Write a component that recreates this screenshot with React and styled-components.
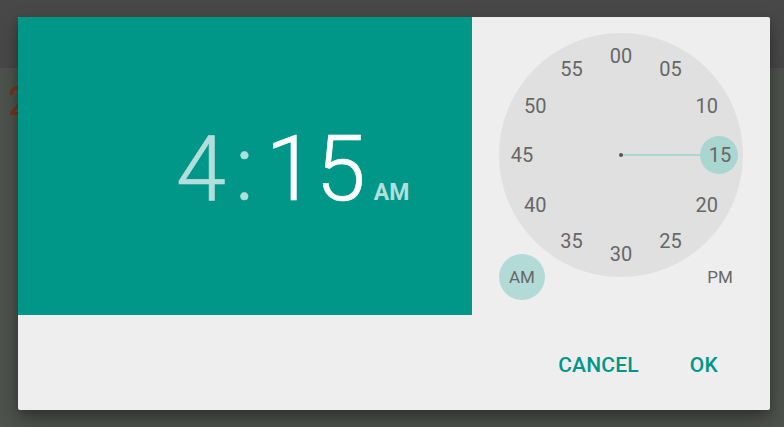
import React from "react";
import styled, { createGlobalStyle } from "styled-components";

const Global = createGlobalStyle`
  html, body { margin: 0; padding: 0; }
  body { font-family: Roboto, "Noto Sans", "Liberation Sans", sans-serif; background: #4e544d; }
`;

const Page = styled.div`
  position: relative;
  width: 784px;
  height: 427px;
  overflow: hidden;
  background: #4e544d;
`;

const AppBar = styled.div`
  height: 68px;
  background: #484848;
`;

const Content = styled.div`
  padding: 14px 0 0 8px;
`;

const BigNumber = styled.div`
  font-size: 40px;
  line-height: 40px;
  color: #7a3417;
`;

const Overlay = styled.div`
  position: absolute;
  inset: 0;
  padding: 17px 14px 17px 18px;
  display: flex;
  align-items: flex-start;
`;

const Dialog = styled.div`
  width: 752px;
  height: 393px;
  background: #eeeeee;
  border-radius: 2px;
  overflow: hidden;
  box-shadow: 0 12px 24px rgba(0, 0, 0, 0.28), 0 4px 8px rgba(0, 0, 0, 0.2);
  display: grid;
  grid-template-columns: 454px 298px;
  grid-template-rows: 298px 1fr;
`;

const Header = styled.div`
  background: #009688;
  display: flex;
  align-items: center;
  padding-left: 158px;
`;

const Time = styled.div`
  display: flex;
  align-items: baseline;
  line-height: 1;
  transform: translateY(4px);
`;

const Digit = styled.span`
  font-size: 90px;
  font-weight: 300;
  color: ${(p) => (p.$active ? "#ffffff" : "#b2dfdb")};
  -webkit-text-stroke: 0.6px currentColor;
`;

const Sep = styled.span`
  font-size: 90px;
  font-weight: 300;
  color: #b2dfdb;
  margin: 0 12px 0 9px;
  -webkit-text-stroke: 0.6px currentColor;
`;

const Meridiem = styled.span`
  font-size: 23px;
  font-weight: 700;
  color: #b2dfdb;
  margin-left: 8px;
`;

const ClockPane = styled.div`
  display: flex;
  flex-direction: column;
  align-items: center;
  padding-top: 16px;
`;

const Face = styled.div`
  position: relative;
  width: 244px;
  height: 244px;
  border-radius: 50%;
  background: #e0e0e0;
`;

const Num = styled.span`
  position: absolute;
  transform: translate(-50%, -50%);
  font-size: 20px;
  color: #676767;
  line-height: 1;
  z-index: 2;
`;

const Hand = styled.div`
  position: absolute;
  left: 122px;
  top: 121px;
  width: 98px;
  height: 2px;
  background: #a9d6d1;
`;

const Dot = styled.div`
  position: absolute;
  left: 120px;
  top: 120px;
  width: 4px;
  height: 4px;
  border-radius: 50%;
  background: #555555;
`;

const Selector = styled.div`
  position: absolute;
  left: 201px;
  top: 103px;
  width: 38px;
  height: 38px;
  border-radius: 50%;
  background: #a9d6d1;
`;

const AmPmRow = styled.div`
  width: 244px;
  margin-top: -23px;
  display: flex;
  justify-content: space-between;
`;

const AmPm = styled.div`
  width: 46px;
  height: 46px;
  border-radius: 50%;
  display: flex;
  align-items: center;
  justify-content: center;
  font-size: 17px;
  color: #676767;
  background: ${(p) => (p.$selected ? "#b2dbd7" : "transparent")};
`;

const Actions = styled.div`
  grid-column: 1 / -1;
  display: flex;
  justify-content: flex-end;
  align-items: center;
  gap: 51px;
  padding: 4px 52px 0 0;
`;

const Button = styled.button`
  border: none;
  background: none;
  padding: 0;
  font-family: Roboto, "Noto Sans", sans-serif;
  font-size: 21px;
  font-weight: 500;
  color: #009688;
  letter-spacing: 0.2px;
`;

const labels = ["00", "05", "10", "15", "20", "25", "30", "35", "40", "45", "50", "55"];

export default function App() {
  return (
    <>
      <Global />
      <Page>
        <AppBar />
        <Content>
          <BigNumber>2</BigNumber>
        </Content>
        <Overlay>
          <Dialog>
            <Header>
              <Time>
                <Digit>4</Digit>
                <Sep>:</Sep>
                <Digit $active>15</Digit>
                <Meridiem>AM</Meridiem>
              </Time>
            </Header>
            <ClockPane>
              <Face>
                <Hand />
                <Selector />
                <Dot />
                {labels.map((l, i) => {
                  const a = (i * 30 * Math.PI) / 180;
                  const r = 99;
                  return (
                    <Num
                      key={l}
                      style={{ left: 122 + r * Math.sin(a), top: 122 - r * Math.cos(a) }}
                    >
                      {l}
                    </Num>
                  );
                })}
              </Face>
              <AmPmRow>
                <AmPm $selected>AM</AmPm>
                <AmPm>PM</AmPm>
              </AmPmRow>
            </ClockPane>
            <Actions>
              <Button>CANCEL</Button>
              <Button>OK</Button>
            </Actions>
          </Dialog>
        </Overlay>
      </Page>
    </>
  );
}
